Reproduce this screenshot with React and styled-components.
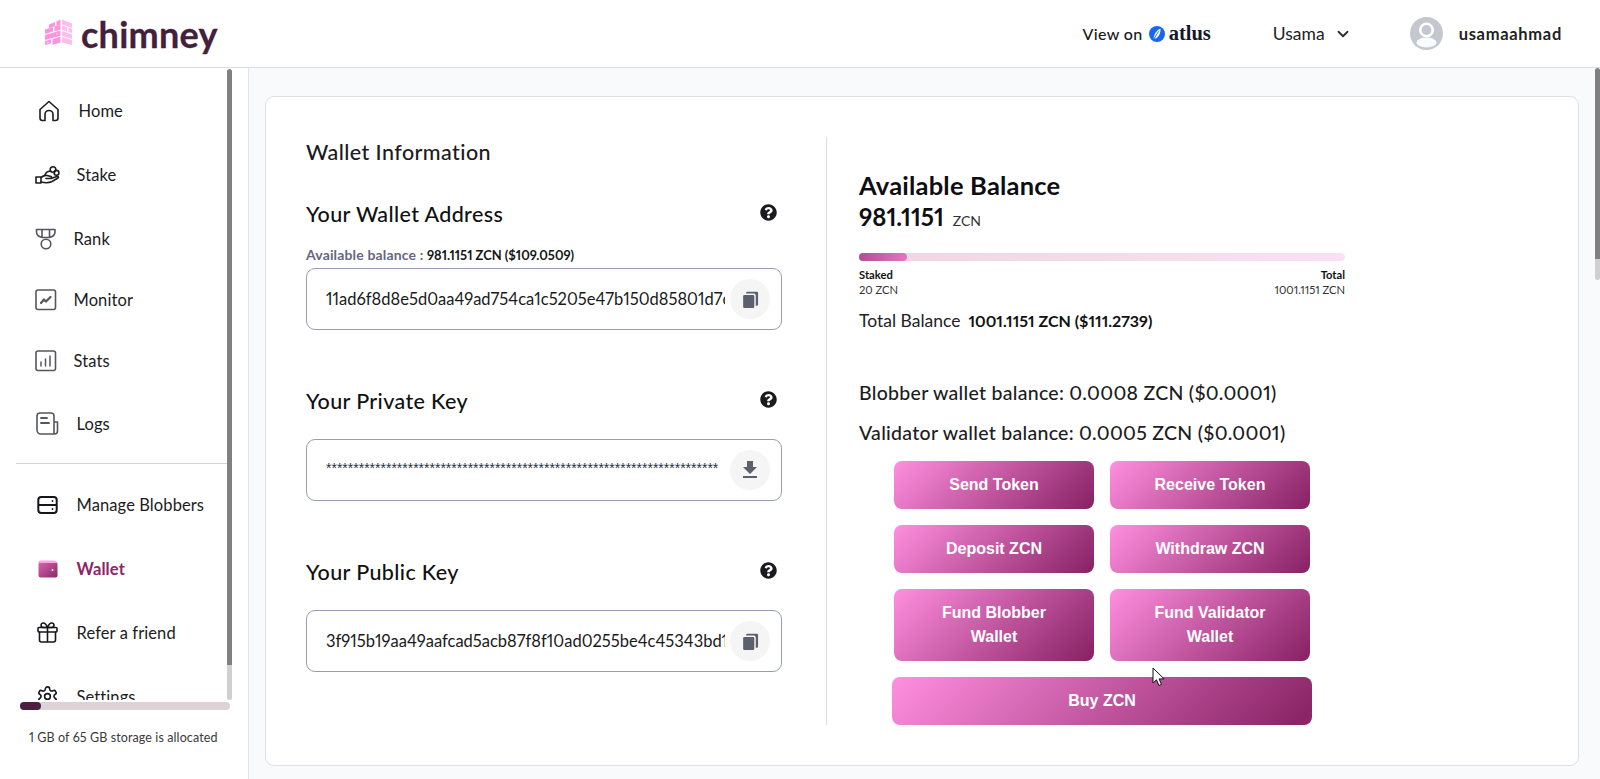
import React from 'react';
import styled, { createGlobalStyle } from 'styled-components';
import { FaQuestionCircle } from 'react-icons/fa';
import { MdFileDownload } from 'react-icons/md';
import { ChevronDown } from 'lucide-react';

const Global = createGlobalStyle`
  html, body { margin: 0; padding: 0; height: 100%; overflow: hidden; background: #fff; }
  #root { height: 100%; }
  * { box-sizing: border-box; }
  body { font-family: Lato, "Noto Sans", sans-serif; color: #111; font-variant-numeric: proportional-nums; }
`;

const Page = styled.div`
  display: flex;
  flex-direction: column;
  height: 779px;
  width: 1600px;
`;

const Header = styled.header`
  flex: 0 0 68px;
  display: flex;
  align-items: center;
  background: #fff;
  border-bottom: 1px solid #dcdde1;
  padding: 0 38px 0 45px;
`;
const Logo = styled.div`
  display: flex;
  align-items: center;
  gap: 9px;
`;
const LogoMark = styled.span`
  display: flex;
  margin-top: -4px;
`;
const LogoWord = styled.span`
  font-size: 36px;
  font-weight: 700;
  color: #43203b;
  letter-spacing: 0.25px;
  line-height: 40px;
  -webkit-text-stroke: 0.3px #43203b;
`;
const HeaderRight = styled.div`
  margin-left: auto;
  display: flex;
  align-items: center;
`;
const ViewOn = styled.div`
  display: flex;
  align-items: center;
  font-size: 16px;
  font-weight: 500;
  letter-spacing: 0.35px;
  color: #1a1a1a;
  gap: 6px;
  margin-right: 62px;
`;
const AtlusMark = styled.span`
  display: flex;
  align-items: center;
  gap: 4px;
`;
const AtlusWord = styled.span`
  font-family: "Liberation Serif", serif;
  font-weight: 700;
  font-size: 20.5px;
  letter-spacing: 0;
  color: #14172b;
`;
const UserMenu = styled.div`
  display: flex;
  align-items: center;
  gap: 9px;
  font-size: 17.5px;
  color: #222;
  margin-right: 58px;
`;
const Avatar = styled.div`
  display: flex;
  align-items: center;
  gap: 16px;
  font-size: 16.5px;
  font-weight: 700;
  color: #222;
  letter-spacing: 0.7px;
`;

const Body = styled.div`
  flex: 1;
  display: flex;
  min-height: 0;
`;

const Sidebar = styled.aside`
  flex: 0 0 249px;
  display: flex;
  flex-direction: column;
  background: #fff;
  border-right: 1px solid #e4e5ea;
`;
const NavWrap = styled.div`
  flex: 0 0 632px;
  display: flex;
  overflow: hidden;
`;
const Nav = styled.nav`
  flex: 0 0 227px;
  display: flex;
  flex-direction: column;
  padding-top: 11px;
`;
const NavItem = styled.div`
  flex: 0 0 ${p => p.$h}px;
  display: flex;
  align-items: center;
  padding-left: ${p => p.$left}px;
  font-size: 16.5px;
  letter-spacing: 0.1px;
  font-weight: ${p => (p.$active ? 700 : 400)};
  color: ${p => (p.$active ? '#8c2568' : '#1c1c22')};
`;
const NavIcon = styled.span`
  flex: 0 0 ${p => p.$w}px;
  display: flex;
  align-items: center;
  margin-top: -1px;
`;
const NavDivider = styled.div`
  flex: 0 0 1px;
  margin: 8px 0 9px 16px;
  background: #d3d3da;
`;
const Track = styled.div`
  flex: 0 0 5px;
  display: flex;
  flex-direction: column;
  padding-top: ${p => p.$top || 0}px;
`;
const ThumbDark = styled.div`
  flex: 0 0 ${p => p.$h}px;
  background: #808080;
  border-radius: 3px 3px 0 0;
`;
const ThumbLight = styled.div`
  flex: 0 0 ${p => p.$h}px;
  background: #d0d0d0;
  border-radius: 0 0 3px 3px;
`;
const Usage = styled.div`
  display: flex;
  flex-direction: column;
  padding: 2px 18px 0 20px;
`;
const UsageBar = styled.div`
  height: 8px;
  border-radius: 4px;
  background: #dcd3d9;
`;
const UsageFill = styled.div`
  height: 100%;
  border-radius: 4px;
  background: #4d1f43;
`;
const UsageText = styled.div`
  margin-top: 20px;
  padding-left: 9px;
  font-size: 12.5px;
  color: #3a3a3a;
  letter-spacing: 0.1px;
`;

const Main = styled.main`
  flex: 1;
  display: flex;
  background: #f9fafb;
  min-width: 0;
`;
const MainContent = styled.div`
  flex: 1;
  padding: 28px 16px 13px 16px;
`;
const Card = styled.section`
  height: 670px;
  display: flex;
  background: #fff;
  border: 1px solid #dfe0e4;
  border-radius: 9px;
  padding: 40px 0 40px 40px;
`;
const LeftCol = styled.div`
  flex: 0 0 476px;
`;
const CardTitle = styled.h2`
  margin: 0;
  height: 30px;
  line-height: 30px;
  font-size: 21.5px;
  font-weight: 500;
  color: #1b1b20;
  letter-spacing: 0.42px;
`;
const Field = styled.div`
  margin-top: ${p => p.$mt}px;
`;
const FieldHead = styled.div`
  display: flex;
  align-items: center;
  justify-content: space-between;
  height: 30px;
  padding-right: 5px;
  margin-bottom: ${p => (p.$note ? 17 : 22)}px;
`;
const FieldTitle = styled.h3`
  margin: -2px 0 0;
  font-size: 21.5px;
  font-weight: 500;
  color: #111;
  letter-spacing: 0.37px;
`;
const HelpIcon = styled(FaQuestionCircle)`
  font-size: 17px;
  color: #1a1a1f;
  margin-top: -6px;
`;
const Note = styled.div`
  height: 16px;
  line-height: 16px;
  margin-bottom: 5px;
  font-size: 14px;
  font-weight: 700;
  letter-spacing: 0.15px;
  color: #66667f;
`;
const NoteValue = styled.span`
  font-size: 12.9px;
  letter-spacing: 0;
  color: #141414;
`;
const KeyBox = styled.div`
  height: 62px;
  display: flex;
  align-items: center;
  border: 1px solid #9a9cb6;
  border-radius: 9px;
  padding: 0 11px 0 19px;
  gap: 5px;
`;
const KeyText = styled.div`
  flex: 0 0 399px;
  overflow: hidden;
  white-space: nowrap;
  font-size: 16.5px;
  color: #1a1a1a;
`;
const MaskedText = styled(KeyText)`
  font-family: "Liberation Sans", Arial, sans-serif;
  font-size: 14px;
  margin-top: -4px;
  color: #26303f;
`;
const RoundBtn = styled.div`
  flex: 0 0 40px;
  height: 40px;
  border-radius: 50%;
  background: #f5f5f6;
  display: flex;
  align-items: center;
  justify-content: center;
  color: #5c5f6c;
`;

const Divider = styled.div`
  flex: 0 0 1px;
  margin-left: 44px;
  background: #dddde2;
`;
const RightCol = styled.div`
  flex: 0 0 486px;
  margin-left: 32px;
  padding-top: 34px;
  position: relative;
`;
const BalanceTitle = styled.div`
  font-size: 25.5px;
  font-weight: 700;
  line-height: 28px;
  color: #0e0e12;
  letter-spacing: 0.2px;
`;
const BalanceRow = styled.div`
  display: flex;
  align-items: baseline;
  gap: 9px;
  line-height: 32px;
  margin-top: 2px;
`;
const BalanceValue = styled.span`
  font-size: 24px;
  font-weight: 700;
  color: #0e0e12;
`;
const BalanceUnit = styled.span`
  font-size: 14px;
  color: #333;
`;
const Progress = styled.div`
  margin-top: 16px;
  height: 8px;
  border-radius: 4px;
  background: linear-gradient(90deg, #efd5e5, #f9e1f3);
`;
const ProgressFill = styled.div`
  height: 100%;
  border-radius: 4px;
  background: linear-gradient(90deg, #b54c92, #e376c5);
`;
const ProgressLabels = styled.div`
  display: flex;
  justify-content: space-between;
  margin-top: 6px;
  font-size: 11.2px;
  line-height: 15px;
  color: #333;
`;
const LabelCol = styled.div`
  display: flex;
  flex-direction: column;
  text-align: ${p => (p.$end ? 'right' : 'left')};
`;
const LabelHead = styled.span`
  font-weight: 700;
  color: #111;
`;
const TotalLine = styled.div`
  display: flex;
  gap: 8px;
  margin-top: 14px;
  font-size: 17.5px;
  line-height: 20px;
  color: #222;
`;
const TotalValue = styled.span`
  font-weight: 700;
  font-size: 16px;
  color: #111;
`;
const WalletLine = styled.div`
  font-size: 19.5px;
  font-weight: 500;
  line-height: 24px;
  margin-top: ${p => p.$mt}px;
  color: #1c1c22;
  letter-spacing: 0.28px;
`;
const ButtonGrid = styled.div`
  display: grid;
  grid-template-columns: 200px 200px;
  gap: 16px;
  margin: 16px 0 0 35px;
  width: 416px;
`;
const GradBtn = styled.button`
  border: 0;
  border-radius: 8px;
  min-height: 48px;
  padding: 12px 24px;
  background: linear-gradient(135deg, #ff8fe0 0%, #8c2568 96%);
  color: #fff;
  font-family: "Liberation Sans", Arial, sans-serif;
  font-weight: 700;
  font-size: 16px;
  line-height: 24px;
  text-align: center;
`;
const BuyBtn = styled(GradBtn)`
  display: block;
  width: 420px;
  margin: 16px 0 0 33px;
`;
const Cursor = styled.svg`
  position: absolute;
  left: 293px;
  top: 530px;
`;

const CopyIcon = () => (
  <svg width="21" height="21" viewBox="0 0 20 20" fill="currentColor">
    <path d="M7 2.5h9a1.2 1.2 0 0 1 1.2 1.2v11a1.2 1.2 0 0 1-1.2 1.2h-1V6.2A1.8 1.8 0 0 0 13.2 4.4H5.8v-.7A1.2 1.2 0 0 1 7 2.5z" />
    <rect x="3" y="5.6" width="10.6" height="12.6" rx="1.2" />
  </svg>
);

const stroke = { fill: 'none', stroke: '#1c1c22', strokeWidth: 1.6, strokeLinecap: 'round', strokeLinejoin: 'round' };
const grayStroke = { ...stroke, stroke: '#55565e' };

const HomeIcon = () => (
  <svg width="22" height="22" viewBox="0 0 22 22" {...stroke}>
    <path d="M2 9.5 11 1.5l9 8V18a2.5 2.5 0 0 1-2.5 2.5h-2.5v-6a4 4 0 0 0-8 0v6H4.5A2.5 2.5 0 0 1 2 18z" />
  </svg>
);
const StakeIcon = () => (
  <svg width="25" height="20" viewBox="0 0 25 20" {...stroke}>
    <path d="M1 12h5v6H1zM6 12.5c2-1.5 4-2.5 6-2l4 1c1 .4.8 2-.5 2H11" />
    <path d="M6 17c4 1 8 1 11-.5l6-3.5c1-.8 0-2-1.2-1.6L16 13.5" />
    <path d="M10 10c.5-2.5 3-4 5-3.7" />
    <circle cx="18" cy="4.5" r="2.8" />
    <circle cx="21.5" cy="7.8" r="2.4" />
  </svg>
);
const RankIcon = () => (
  <svg width="22" height="22" viewBox="0 0 22 22" {...grayStroke}>
    <path d="M1.5 1.5h18.5v2.5c0 3-3 5-6 5.500H7.500c-3-.5-6-2.500-6-5.500zM7 2v7.500M14.500 2v7.500" />
    <circle cx="11" cy="16" r="4.800" />
  </svg>
);
const MonitorIcon = () => (
  <svg width="22" height="22" viewBox="0 0 22 22">
    <rect x="1" y="1" width="19.5" height="19.5" rx="2" {...grayStroke} />
    <path d="M6 14l3-3.5 2 2 4.5-4.5" {...grayStroke} strokeWidth="2.2" />
  </svg>
);
const StatsIcon = () => (
  <svg width="22" height="22" viewBox="0 0 22 22" {...grayStroke}>
    <rect x="1" y="1" width="19.5" height="19.5" rx="2" />
    <path d="M6 16v-4M10.5 16V9M15 16V6" strokeWidth="1.5" />
  </svg>
);
const LogsIcon = () => (
  <svg width="23" height="23" viewBox="0 0 23 23" {...grayStroke}>
    <path d="M5 22h13.5a3 3 0 0 0 3-3V10h-3.5M18 22V4a3 3 0 0 0-3-3H4a3 3 0 0 0-3 3v14a4 4 0 0 0 4 4z" />
    <path d="M5 6h6M5 11h8" strokeWidth="1.8" />
  </svg>
);
const ServerIcon = () => (
  <svg width="21" height="18" viewBox="0 0 21 18" fill="none" stroke="#16161a" strokeWidth="2">
    <rect x="1.3" y="1" width="18.4" height="16" rx="3" />
    <path d="M1.3 9h18.4" />
    <circle cx="15.5" cy="5" r=".9" fill="#16161a" stroke="none" />
    <circle cx="15.5" cy="13" r=".9" fill="#16161a" stroke="none" />
  </svg>
);
const WalletIcon = () => (
  <svg width="20" height="18" viewBox="0 0 20 18">
    <defs>
      <linearGradient id="wg" x1="0" y1="0" x2="1" y2="1">
        <stop offset="0" stopColor="#d767ae" />
        <stop offset="1" stopColor="#8c2568" />
      </linearGradient>
    </defs>
    <rect x="0.5" y="2" width="19" height="15.5" rx="2" fill="url(#wg)" />
    <path d="M2.5 0.5h14a2 2 0 0 1 2 2V3H0.5A2 2 0 0 1 2.5.5z" fill="#f7a8e0" />
    <circle cx="14.5" cy="10" r="1" fill="#fff" />
  </svg>
);
const GiftIcon = () => (
  <svg width="21" height="21" viewBox="0 0 21 21" fill="none" stroke="#16161a" strokeWidth="1.6" strokeLinejoin="round" strokeLinecap="round">
    <rect x="1" y="5.5" width="19" height="4.5" rx="1" />
    <path d="M2.5 10v8a2 2 0 0 0 2 2h12a2 2 0 0 0 2-2v-8M10.5 5.5V20" />
    <path d="M10.5 5.5C9.5 3 8 1 6.3 1a2.2 2.2 0 0 0 0 4.5zM10.5 5.5C11.5 3 13 1 14.7 1a2.2 2.2 0 0 1 0 4.5z" />
  </svg>
);
const SettingsIcon = () => (
  <svg width="23" height="23" viewBox="0 0 24 24" fill="none" stroke="#16161a" strokeWidth="1.7" strokeLinejoin="round">
    <path d="M12.2 2h-.4a2 2 0 0 0-2 2v.2a2 2 0 0 1-1 1.7l-.4.2a2 2 0 0 1-2 0l-.2-.1a2 2 0 0 0-2.7.7l-.2.4a2 2 0 0 0 .7 2.7l.2.1a2 2 0 0 1 1 1.7v.5a2 2 0 0 1-1 1.7l-.2.1a2 2 0 0 0-.7 2.7l.2.4a2 2 0 0 0 2.7.7l.2-.1a2 2 0 0 1 2 0l.4.2a2 2 0 0 1 1 1.7v.2a2 2 0 0 0 2 2h.4a2 2 0 0 0 2-2v-.2a2 2 0 0 1 1-1.7l.4-.2a2 2 0 0 1 2 0l.2.1a2 2 0 0 0 2.7-.7l.2-.4a2 2 0 0 0-.7-2.7l-.2-.1a2 2 0 0 1-1-1.7v-.5a2 2 0 0 1 1-1.7l.2-.1a2 2 0 0 0 .7-2.7l-.2-.4a2 2 0 0 0-2.7-.7l-.2.1a2 2 0 0 1-2 0l-.4-.2a2 2 0 0 1-1-1.7V4a2 2 0 0 0-2-2z" />
    <circle cx="12" cy="12" r="3" />
  </svg>
);
const LogoIcon = () => (
  <svg width="27" height="27" viewBox="0 0 27 27">
    <g fill="#ff93e0">
      <path d="M4 6.5 10 4v4.2L4 10.5z" />
      <path d="M11.5 3.5 15.5 1.5v5l-4 1.5z" />
      <path d="M0 11.5 8 9v4.5L0 16z" />
      <path d="M9.5 8.5 15.5 6.8v5L9.5 13.2z" />
      <path d="M0 17 15.5 12.5v5.2L0 22z" />
      <path d="M0 23 6 21.3v4.2L0 27z" />
      <path d="M7.5 21 15.5 18.7v6L7.5 26.8z" />
    </g>
    <g fill="#ffbdec">
      <path d="M17 1.5 27 5.5v4.3L17 6.5z" />
      <path d="M17 7.5 22 9v4.5L17 12z" />
      <path d="M23.5 9.5 27 10.8v4.5L23.5 14z" />
      <path d="M17 13 27 16.5v4.5L17 18z" />
      <path d="M17 19 27 22v5L17 24.5z" />
    </g>
    <circle cx="3" cy="24.5" r=".7" fill="#fff" />
    <circle cx="12" cy="16" r=".7" fill="#fff" />
  </svg>
);
const AtlusIcon = () => (
  <svg width="16" height="16" viewBox="0 0 15 15">
    <circle cx="7.5" cy="7.5" r="7.5" fill="#1668ee" />
    <path d="M10.8 2.6C7.6 3.6 5 6.8 4.3 11.5c.6.3 1.3.4 2 .2C9.3 10 11 6.5 10.8 2.6z" fill="#fff" />
    <path d="M4.3 12.5 9 5" stroke="#1668ee" strokeWidth=".9" />
  </svg>
);
const UserAvatar = () => (
  <svg width="33" height="33" viewBox="0 0 33 33">
    <circle cx="16.5" cy="16.5" r="16.5" fill="#c3c7d0" />
    <circle cx="16.5" cy="13" r="6.2" fill="none" stroke="#fff" strokeWidth="2.6" />
    <ellipse cx="16.5" cy="25.5" rx="10" ry="5" fill="#fff" opacity=".92" />
  </svg>
);

const navTop = [
  { label: 'Home', icon: <HomeIcon />, left: 38, w: 40.5, h: 64 },
  { label: 'Stake', icon: <StakeIcon />, left: 35, w: 41.5, h: 64 },
  { label: 'Rank', icon: <RankIcon />, left: 35, w: 38.5, h: 64 },
  { label: 'Monitor', icon: <MonitorIcon />, left: 35, w: 38.5, h: 58 },
  { label: 'Stats', icon: <StatsIcon />, left: 35, w: 38.5, h: 64 },
  { label: 'Logs', icon: <LogsIcon />, left: 36, w: 40.5, h: 62 },
];
const navBottom = [
  { label: 'Manage Blobbers', icon: <ServerIcon />, left: 37, w: 39.5, h: 64 },
  { label: 'Wallet', icon: <WalletIcon />, left: 38, w: 38.5, h: 64, active: true },
  { label: 'Refer a friend', icon: <GiftIcon />, left: 37, w: 39.5, h: 64 },
  { label: 'Settings', icon: <SettingsIcon />, left: 36, w: 40.5, h: 64 },
];

const renderNav = list => list.map(n => (
  <NavItem key={n.label} $h={n.h} $left={n.left} $active={n.active}>
    <NavIcon $w={n.w}>{n.icon}</NavIcon>
    {n.label}
  </NavItem>
));

export default function App() {
  return (
    <Page>
      <Global />
      <Header>
        <Logo>
          <LogoMark><LogoIcon /></LogoMark>
          <LogoWord>chimney</LogoWord>
        </Logo>
        <HeaderRight>
          <ViewOn>
            View on
            <AtlusMark><AtlusIcon /><AtlusWord>atlus</AtlusWord></AtlusMark>
          </ViewOn>
          <UserMenu>
            Usama
            <ChevronDown size={18} strokeWidth={2.4} color="#2a2a35" />
          </UserMenu>
          <Avatar>
            <UserAvatar />
            usamaahmad
          </Avatar>
        </HeaderRight>
      </Header>
      <Body>
        <Sidebar>
          <NavWrap>
            <Nav>
              {renderNav(navTop)}
              <NavDivider />
              {renderNav(navBottom)}
            </Nav>
            <Track $top={1}>
              <ThumbDark $h={596} />
              <ThumbLight $h={35} />
            </Track>
          </NavWrap>
          <Usage>
            <UsageBar><UsageFill style={{ width: '10%' }} /></UsageBar>
            <UsageText>1 GB of 65 GB storage is allocated</UsageText>
          </Usage>
        </Sidebar>
        <Main>
          <MainContent>
            <Card>
              <LeftCol>
                <CardTitle>Wallet Information</CardTitle>
                <Field $mt={33}>
                  <FieldHead $note>
                    <FieldTitle>Your Wallet Address</FieldTitle>
                    <HelpIcon />
                  </FieldHead>
                  <Note>Available balance : <NoteValue>981.1151 ZCN ($109.0509)</NoteValue></Note>
                  <KeyBox>
                    <KeyText>11ad6f8d8e5d0aa49ad754ca1c5205e47b150d85801d7c3e9a4</KeyText>
                    <RoundBtn><CopyIcon /></RoundBtn>
                  </KeyBox>
                </Field>
                <Field $mt={57}>
                  <FieldHead>
                    <FieldTitle>Your Private Key</FieldTitle>
                    <HelpIcon />
                  </FieldHead>
                  <KeyBox>
                    <MaskedText>{'*'.repeat(72)}</MaskedText>
                    <RoundBtn><MdFileDownload size={24} /></RoundBtn>
                  </KeyBox>
                </Field>
                <Field $mt={57}>
                  <FieldHead>
                    <FieldTitle>Your Public Key</FieldTitle>
                    <HelpIcon />
                  </FieldHead>
                  <KeyBox>
                    <KeyText>3f915b19aa49aafcad5acb87f8f10ad0255be4c45343bd1c6f2</KeyText>
                    <RoundBtn><CopyIcon /></RoundBtn>
                  </KeyBox>
                </Field>
              </LeftCol>
              <Divider />
              <RightCol>
                <BalanceTitle>Available Balance</BalanceTitle>
                <BalanceRow>
                  <BalanceValue>981.1151</BalanceValue>
                  <BalanceUnit>ZCN</BalanceUnit>
                </BalanceRow>
                <Progress><ProgressFill style={{ width: '9.9%' }} /></Progress>
                <ProgressLabels>
                  <LabelCol><LabelHead>Staked</LabelHead>20 ZCN</LabelCol>
                  <LabelCol $end><LabelHead>Total</LabelHead>1001.1151 ZCN</LabelCol>
                </ProgressLabels>
                <TotalLine>Total Balance <TotalValue>1001.1151 ZCN ($111.2739)</TotalValue></TotalLine>
                <WalletLine $mt={50}>Blobber wallet balance: 0.0008 ZCN ($0.0001)</WalletLine>
                <WalletLine $mt={16}>Validator wallet balance: 0.0005 ZCN ($0.0001)</WalletLine>
                <ButtonGrid>
                  <GradBtn>Send Token</GradBtn>
                  <GradBtn>Receive Token</GradBtn>
                  <GradBtn>Deposit ZCN</GradBtn>
                  <GradBtn>Withdraw ZCN</GradBtn>
                  <GradBtn>Fund Blobber Wallet</GradBtn>
                  <GradBtn>Fund Validator Wallet</GradBtn>
                </ButtonGrid>
                <BuyBtn>Buy ZCN</BuyBtn>
                <Cursor width="14" height="20" viewBox="0 0 14 20">
                  <path d="M1 1v15l3.500-3.200 2.400 5.700 2.600-1.100-2.400-5.500h5z" fill="#fff" stroke="#111" strokeWidth="1" />
                </Cursor>
              </RightCol>
            </Card>
          </MainContent>
          <Track>
            <ThumbDark $h={191} />
            <ThumbLight $h={21} />
          </Track>
        </Main>
      </Body>
    </Page>
  );
}
